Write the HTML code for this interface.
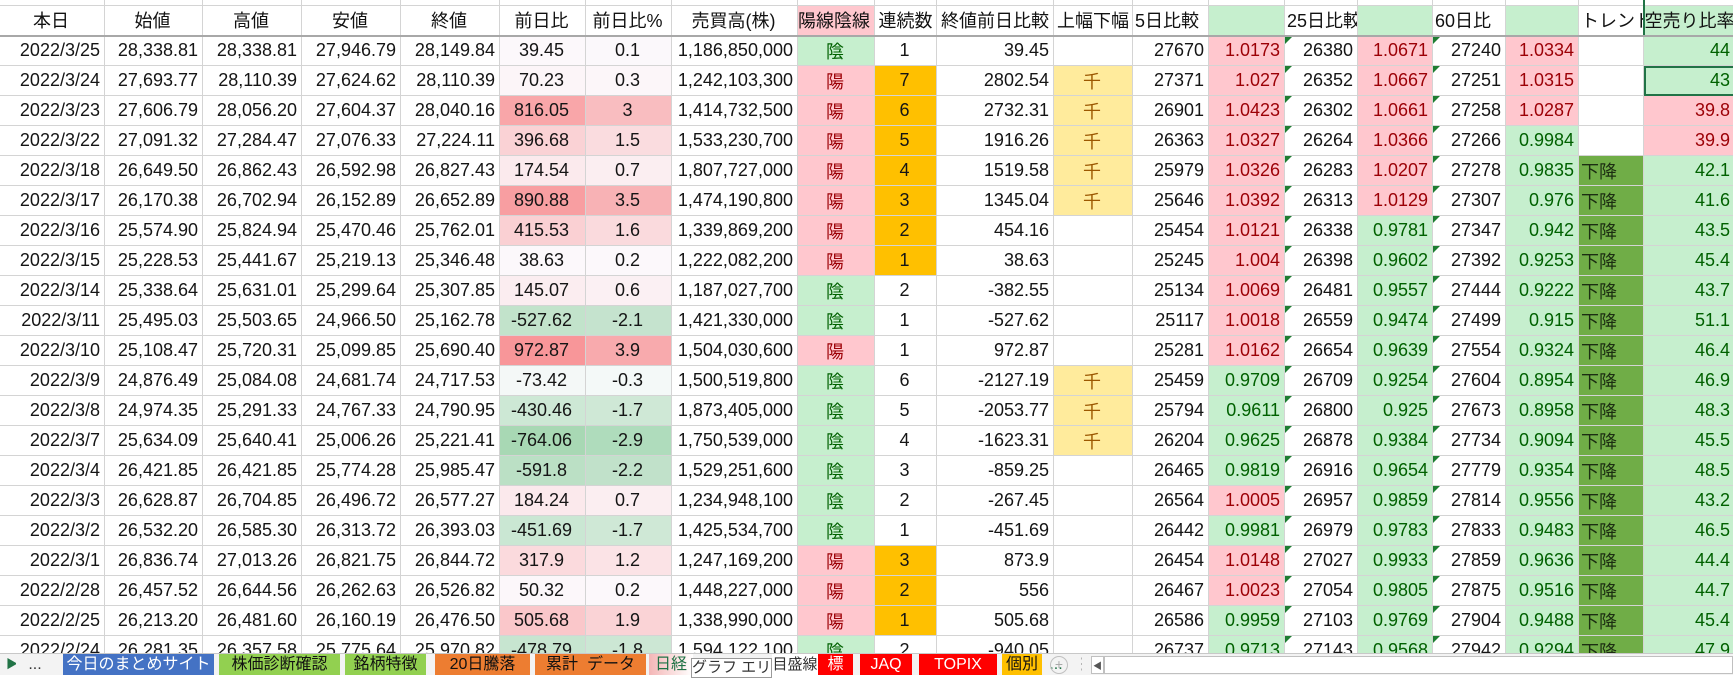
<!DOCTYPE html>
<html><head><meta charset="utf-8">
<style>
html,body{margin:0;padding:0;width:1733px;height:674px;overflow:hidden;background:#fff}
table{position:absolute;left:-1px;top:-25px;border-collapse:collapse;table-layout:fixed;width:1735px}
tr{height:30px}
td{border:1px solid #d4d4d4;padding:0 4px 0 2px;font:18px "Liberation Sans","Noto Sans CJK JP",sans-serif;white-space:nowrap;overflow:hidden;text-align:right;color:#151515;position:relative;box-sizing:border-box}
tr.h td{text-align:center;border-bottom:2px solid #a8a8a8;color:#111}
tr.h td.l{text-align:left}
.c{text-align:center}
.yo{background:#ffc7ce;color:#9c0006}
.in{background:#c6efce;color:#006100}
.o{background:#ffc000}
.sen{background:#ffeb9c;color:#9c5700;text-align:center}
.p{background:#ffc7ce;color:#9c0006}
.g{background:#c6efce;color:#006100}
.tr{background:#70ad47;color:#1c2e12;text-align:left}
.s{background:#c6efce;color:#006100}
.sp{background:#ffc7ce;color:#9c0006}
.t::before{content:"";position:absolute;left:0;top:0;border-top:7px solid #1e7d32;border-right:7px solid transparent}
.sel{outline:2px solid #217346;outline-offset:-2px}
#tabs{position:absolute;left:0;top:653px;width:1733px;height:21px;background:#f3f3f3;border-top:1px solid #c8c8c8;font:16px "Liberation Sans","Noto Sans CJK JP",sans-serif}
#tabs div{position:absolute;top:0;height:21px;line-height:21px;text-align:center;white-space:nowrap;overflow:hidden}
</style></head><body>
<table>
<colgroup><col style="width:105px"><col style="width:98px"><col style="width:99px"><col style="width:99px"><col style="width:99px"><col style="width:86px"><col style="width:86px"><col style="width:126px"><col style="width:77px"><col style="width:62px"><col style="width:117px"><col style="width:79px"><col style="width:76px"><col style="width:76px"><col style="width:73px"><col style="width:75px"><col style="width:73px"><col style="width:73px"><col style="width:65px"><col style="width:91px"></colgroup>
<tr style="height:30px"><td></td><td></td><td></td><td></td><td></td><td></td><td></td><td></td><td></td><td></td><td></td><td></td><td></td><td></td><td></td><td></td><td></td><td></td><td></td><td style="border-left:2px solid #217346"></td></tr>
<tr class="h"><td>本日</td><td>始値</td><td>高値</td><td>安値</td><td>終値</td><td>前日比</td><td>前日比%</td><td>売買高(株)</td><td class="yo" style="text-align:left;padding:0">陽線陰線</td><td style="padding:0">連続数</td><td style="text-align:left;padding:0 0 0 4px">終値前日比較</td><td style="padding:0">上幅下幅</td><td class="l">5日比較</td><td class="g"></td><td class="l">25日比較</td><td class="g"></td><td class="l">60日比</td><td class="g"></td><td class="l" style="text-overflow:clip">トレンド</td><td class="s l" style="border-left:2px solid #217346;padding:0">空売り比率</td></tr>
<tr><td>2022/3/25</td><td>28,338.81</td><td>28,338.81</td><td>27,946.79</td><td>28,149.84</td><td class="c" style="background:#fcf8fb">39.45</td><td class="c" style="background:#fbf8fb">0.1</td><td>1,186,850,000</td><td class="c in">陰</td><td class="c">1</td><td>39.45</td><td></td><td>27670</td><td class="p">1.0173</td><td class="t">26380</td><td class="p">1.0671</td><td class="t">27240</td><td class="p">1.0334</td><td></td><td class="s">44</td></tr>
<tr><td>2022/3/24</td><td>27,693.77</td><td>28,110.39</td><td>27,624.62</td><td>28,110.39</td><td class="c" style="background:#fcf5f8">70.23</td><td class="c" style="background:#fcf6f9">0.3</td><td>1,242,103,300</td><td class="c yo">陽</td><td class="c o">7</td><td>2802.54</td><td class="sen">千</td><td>27371</td><td class="p">1.027</td><td class="t">26352</td><td class="p">1.0667</td><td class="t">27251</td><td class="p">1.0315</td><td></td><td class="s sel">43</td></tr>
<tr><td>2022/3/23</td><td>27,606.79</td><td>28,056.20</td><td>27,604.37</td><td>28,040.16</td><td class="c" style="background:#f9a6a9">816.05</td><td class="c" style="background:#f9bdc0">3</td><td>1,414,732,500</td><td class="c yo">陽</td><td class="c o">6</td><td>2732.31</td><td class="sen">千</td><td>26901</td><td class="p">1.0423</td><td class="t">26302</td><td class="p">1.0661</td><td class="t">27258</td><td class="p">1.0287</td><td></td><td class="sp">39.8</td></tr>
<tr><td>2022/3/22</td><td>27,091.32</td><td>27,284.47</td><td>27,076.33</td><td>27,224.11</td><td class="c" style="background:#fad2d5">396.68</td><td class="c" style="background:#fadcdf">1.5</td><td>1,533,230,700</td><td class="c yo">陽</td><td class="c o">5</td><td>1916.26</td><td class="sen">千</td><td>26363</td><td class="p">1.0327</td><td class="t">26264</td><td class="p">1.0366</td><td class="t">27266</td><td class="g">0.9984</td><td></td><td class="sp">39.9</td></tr>
<tr><td>2022/3/18</td><td>26,649.50</td><td>26,862.43</td><td>26,592.98</td><td>26,827.43</td><td class="c" style="background:#fbeaed">174.54</td><td class="c" style="background:#fbeef1">0.7</td><td>1,807,727,000</td><td class="c yo">陽</td><td class="c o">4</td><td>1519.58</td><td class="sen">千</td><td>25979</td><td class="p">1.0326</td><td class="t">26283</td><td class="p">1.0207</td><td class="t">27278</td><td class="g">0.9835</td><td class="tr">下降</td><td class="s">42.1</td></tr>
<tr><td>2022/3/17</td><td>26,170.38</td><td>26,702.94</td><td>26,152.89</td><td>26,652.89</td><td class="c" style="background:#f89ea1">890.88</td><td class="c" style="background:#f8b2b5">3.5</td><td>1,474,190,800</td><td class="c yo">陽</td><td class="c o">3</td><td>1345.04</td><td class="sen">千</td><td>25646</td><td class="p">1.0392</td><td class="t">26313</td><td class="p">1.0129</td><td class="t">27307</td><td class="g">0.976</td><td class="tr">下降</td><td class="s">41.6</td></tr>
<tr><td>2022/3/16</td><td>25,574.90</td><td>25,824.94</td><td>25,470.46</td><td>25,762.01</td><td class="c" style="background:#fad0d3">415.53</td><td class="c" style="background:#fadadd">1.6</td><td>1,339,869,200</td><td class="c yo">陽</td><td class="c o">2</td><td>454.16</td><td></td><td>25454</td><td class="p">1.0121</td><td class="t">26338</td><td class="g">0.9781</td><td class="t">27347</td><td class="g">0.942</td><td class="tr">下降</td><td class="s">43.5</td></tr>
<tr><td>2022/3/15</td><td>25,228.53</td><td>25,441.67</td><td>25,219.13</td><td>25,346.48</td><td class="c" style="background:#fcf8fb">38.63</td><td class="c" style="background:#fcf8fb">0.2</td><td>1,222,082,200</td><td class="c yo">陽</td><td class="c o">1</td><td>38.63</td><td></td><td>25245</td><td class="p">1.004</td><td class="t">26398</td><td class="g">0.9602</td><td class="t">27392</td><td class="g">0.9253</td><td class="tr">下降</td><td class="s">45.4</td></tr>
<tr><td>2022/3/14</td><td>25,338.64</td><td>25,631.01</td><td>25,299.64</td><td>25,307.85</td><td class="c" style="background:#fbedf0">145.07</td><td class="c" style="background:#fbf0f3">0.6</td><td>1,187,027,700</td><td class="c in">陰</td><td class="c">2</td><td>-382.55</td><td></td><td>25134</td><td class="p">1.0069</td><td class="t">26481</td><td class="g">0.9557</td><td class="t">27444</td><td class="g">0.9222</td><td class="tr">下降</td><td class="s">43.7</td></tr>
<tr><td>2022/3/11</td><td>25,495.03</td><td>25,503.65</td><td>24,966.50</td><td>25,162.78</td><td class="c" style="background:#c2e3cb">-527.62</td><td class="c" style="background:#c5e3ce">-2.1</td><td>1,421,330,000</td><td class="c in">陰</td><td class="c">1</td><td>-527.62</td><td></td><td>25117</td><td class="p">1.0018</td><td class="t">26559</td><td class="g">0.9474</td><td class="t">27499</td><td class="g">0.915</td><td class="tr">下降</td><td class="s">51.1</td></tr>
<tr><td>2022/3/10</td><td>25,108.47</td><td>25,720.31</td><td>25,099.85</td><td>25,690.40</td><td class="c" style="background:#f89699">972.87</td><td class="c" style="background:#f8aaad">3.9</td><td>1,504,030,600</td><td class="c yo">陽</td><td class="c">1</td><td>972.87</td><td></td><td>25281</td><td class="p">1.0162</td><td class="t">26654</td><td class="g">0.9639</td><td class="t">27554</td><td class="g">0.9324</td><td class="tr">下降</td><td class="s">46.4</td></tr>
<tr><td>2022/3/9</td><td>24,876.49</td><td>25,084.08</td><td>24,681.74</td><td>24,717.53</td><td class="c" style="background:#f4f8f7">-73.42</td><td class="c" style="background:#f4f9f8">-0.3</td><td>1,500,519,800</td><td class="c in">陰</td><td class="c">6</td><td>-2127.19</td><td class="sen">千</td><td>25459</td><td class="g">0.9709</td><td class="t">26709</td><td class="g">0.9254</td><td class="t">27604</td><td class="g">0.8954</td><td class="tr">下降</td><td class="s">46.9</td></tr>
<tr><td>2022/3/8</td><td>24,974.35</td><td>25,291.33</td><td>24,767.33</td><td>24,790.95</td><td class="c" style="background:#cde8d5">-430.46</td><td class="c" style="background:#cfe8d6">-1.7</td><td>1,873,405,000</td><td class="c in">陰</td><td class="c">5</td><td>-2053.77</td><td class="sen">千</td><td>25794</td><td class="g">0.9611</td><td class="t">26800</td><td class="g">0.925</td><td class="t">27673</td><td class="g">0.8958</td><td class="tr">下降</td><td class="s">48.3</td></tr>
<tr><td>2022/3/7</td><td>25,634.09</td><td>25,640.41</td><td>25,006.26</td><td>25,221.41</td><td class="c" style="background:#a8d8b4">-764.06</td><td class="c" style="background:#afdcbc">-2.9</td><td>1,750,539,000</td><td class="c in">陰</td><td class="c">4</td><td>-1623.31</td><td class="sen">千</td><td>26204</td><td class="g">0.9625</td><td class="t">26878</td><td class="g">0.9384</td><td class="t">27734</td><td class="g">0.9094</td><td class="tr">下降</td><td class="s">45.5</td></tr>
<tr><td>2022/3/4</td><td>26,421.85</td><td>26,421.85</td><td>25,774.28</td><td>25,985.47</td><td class="c" style="background:#bbe0c5">-591.8</td><td class="c" style="background:#c1e1ca">-2.2</td><td>1,529,251,600</td><td class="c in">陰</td><td class="c">3</td><td>-859.25</td><td></td><td>26465</td><td class="g">0.9819</td><td class="t">26916</td><td class="g">0.9654</td><td class="t">27779</td><td class="g">0.9354</td><td class="tr">下降</td><td class="s">48.5</td></tr>
<tr><td>2022/3/3</td><td>26,628.87</td><td>26,704.85</td><td>26,496.72</td><td>26,577.27</td><td class="c" style="background:#fbe9ec">184.24</td><td class="c" style="background:#fbeef1">0.7</td><td>1,234,948,100</td><td class="c in">陰</td><td class="c">2</td><td>-267.45</td><td></td><td>26564</td><td class="p">1.0005</td><td class="t">26957</td><td class="g">0.9859</td><td class="t">27814</td><td class="g">0.9556</td><td class="tr">下降</td><td class="s">43.2</td></tr>
<tr><td>2022/3/2</td><td>26,532.20</td><td>26,585.30</td><td>26,313.72</td><td>26,393.03</td><td class="c" style="background:#cae7d3">-451.69</td><td class="c" style="background:#cfe8d6">-1.7</td><td>1,425,534,700</td><td class="c in">陰</td><td class="c">1</td><td>-451.69</td><td></td><td>26442</td><td class="g">0.9981</td><td class="t">26979</td><td class="g">0.9783</td><td class="t">27833</td><td class="g">0.9483</td><td class="tr">下降</td><td class="s">46.5</td></tr>
<tr><td>2022/3/1</td><td>26,836.74</td><td>27,013.26</td><td>26,821.75</td><td>26,844.72</td><td class="c" style="background:#fbdadd">317.9</td><td class="c" style="background:#fbe3e6">1.2</td><td>1,247,169,200</td><td class="c yo">陽</td><td class="c o">3</td><td>873.9</td><td></td><td>26454</td><td class="p">1.0148</td><td class="t">27027</td><td class="g">0.9933</td><td class="t">27859</td><td class="g">0.9636</td><td class="tr">下降</td><td class="s">44.4</td></tr>
<tr><td>2022/2/28</td><td>26,457.52</td><td>26,644.56</td><td>26,262.63</td><td>26,526.82</td><td class="c" style="background:#fcf7fa">50.32</td><td class="c" style="background:#fcf8fb">0.2</td><td>1,448,227,000</td><td class="c yo">陽</td><td class="c o">2</td><td>556</td><td></td><td>26467</td><td class="p">1.0023</td><td class="t">27054</td><td class="g">0.9805</td><td class="t">27875</td><td class="g">0.9516</td><td class="tr">下降</td><td class="s">44.7</td></tr>
<tr><td>2022/2/25</td><td>26,213.20</td><td>26,481.60</td><td>26,160.19</td><td>26,476.50</td><td class="c" style="background:#fac7ca">505.68</td><td class="c" style="background:#fad3d6">1.9</td><td>1,338,990,000</td><td class="c yo">陽</td><td class="c o">1</td><td>505.68</td><td></td><td>26586</td><td class="g">0.9959</td><td class="t">27103</td><td class="g">0.9769</td><td class="t">27904</td><td class="g">0.9488</td><td class="tr">下降</td><td class="s">45.4</td></tr>
<tr><td>2022/2/24</td><td>26,281.35</td><td>26,357.58</td><td>25,775.64</td><td>25,970.82</td><td class="c" style="background:#c7e5d0">-478.79</td><td class="c" style="background:#cce7d4">-1.8</td><td>1,594,122,100</td><td class="c in">陰</td><td class="c">2</td><td>-940.05</td><td></td><td>26737</td><td class="g">0.9713</td><td class="t">27143</td><td class="g">0.9568</td><td class="t">27942</td><td class="g">0.9294</td><td class="tr">下降</td><td class="s">47.9</td></tr>
</table>
<div id="tabs">
<div style="left:6px;width:10px;color:#217346;font-size:12px">&#9654;</div>
<div style="left:22px;width:26px;color:#333">...</div>
<div style="left:63px;width:151px;background:#4472c4;color:#fff">今日のまとめサイト</div>
<div style="left:219px;width:121px;background:#92d050;color:#111">株価診断確認</div>
<div style="left:345px;width:81px;background:#92d050;color:#111">銘柄特徴</div>
<div style="left:435px;width:95px;background:#ed7d31;color:#111">20日騰落</div>
<div style="left:535px;width:111px;background:#ed7d31;color:#111">累計&nbsp; データ</div>
<div style="left:649px;width:44px;background:linear-gradient(90deg,#f4b6b6,#fff);color:#217346">日経</div>
<div style="left:691px;top:4px;width:81px;height:20px;line-height:18px;background:#fff;border:1px solid #9a9a9a;color:#333;font-size:15px;box-sizing:border-box;z-index:2">グラフ エリア</div>
<div style="left:772px;width:46px;background:#fff;color:#333;font-size:15px">目盛線</div>
<div style="left:818px;width:35px;background:#ff0000;color:#fff">標</div>
<div style="left:860px;width:52px;background:#ff0000;color:#fff">JAQ</div>
<div style="left:919px;width:78px;background:#ff0000;color:#fff">TOPIX</div>
<div style="left:1002px;width:40px;background:#ffc000;color:#111">個別</div>
<div style="left:1046px;width:20px;color:#217346">...</div>
<div style="left:1050px;top:2px;width:16px;height:16px;line-height:15px;border:1px solid #c0c0c0;border-radius:50%;color:#aaa;font-size:14px">+</div>
<div style="left:1074px;width:8px;color:#aaa">&#8942;</div>
<div style="left:1091px;top:2px;width:13px;height:18px;line-height:18px;border:1px solid #c0c0c0;background:#fff;color:#555;font-size:9px;box-sizing:border-box">&#9664;</div>
<div style="left:1104px;top:2px;width:629px;height:18px;border:1px solid #c0c0c0;background:#fff;box-sizing:border-box"></div>
</div>
</body></html>
